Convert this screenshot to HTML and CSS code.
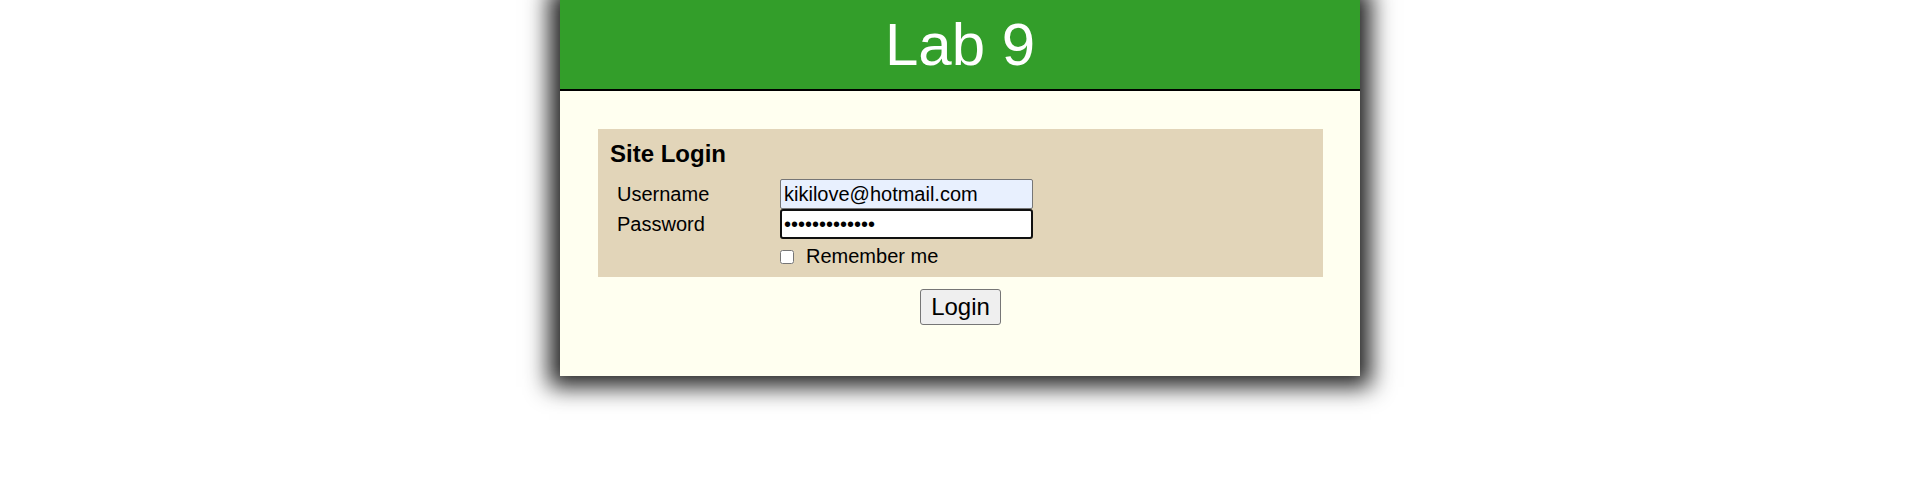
FILE: index.html
```html
<!DOCTYPE html>
<html lang="en">
<head>
<meta charset="utf-8">
<title>Lab 9</title>
<link rel="stylesheet" href="styles.css">
</head>
<body>
<div class="page">
  <header class="banner">
    <h1 class="banner-title">Lab 9</h1>
  </header>
  <main class="content">
    <form class="login-form">
      <div class="panel">
        <h2 class="panel-title">Site Login</h2>
        <div class="fields">
          <label class="field-label" for="user">Username</label>
          <input class="field-input autofilled" id="user" type="text" value="kikilove@hotmail.com">
          <label class="field-label" for="pass">Password</label>
          <input class="field-input focused" id="pass" type="password" value="1234567890123">
          <span class="spacer"></span>
          <label class="remember"><input class="remember-box" type="checkbox">Remember me</label>
        </div>
      </div>
      <div class="actions">
        <button class="login-button" type="button">Login</button>
      </div>
    </form>
  </main>
</div>
</body>
</html>
```

FILE: styles.css
```css
html, body {
  margin: 0;
  padding: 0;
  background: #ffffff;
}

html {
  height: 100%;
}

body {
  min-height: 100%;
  font-family: "Liberation Sans", Arial, sans-serif;
  color: #000;
}

.page {
  width: 800px;
  margin: 0 auto;
  background: #fffff0;
  box-shadow: 0 0 22px 11px #222;
}

.banner {
  background: #339e2a;
  border-bottom: 2px solid #000;
}

.banner-title {
  margin: 0;
  padding: 10px 0;
  font-size: 60px;
  line-height: 69px;
  font-weight: normal;
  color: #fff;
  text-align: center;
}

.content {
  padding: 38px 37px 51px 38px;
}

.login-form {
  margin: 0;
}

.panel {
  background: #e2d5b9;
  padding: 11px 12px 9px 12px;
}

.panel-title {
  margin: 0 0 11px 0;
  font-size: 24px;
  line-height: 28px;
  font-weight: bold;
}

.fields {
  display: grid;
  grid-template-columns: 170px 253px;
  grid-template-rows: 30px 30px auto;
}

.field-label {
  align-self: center;
  padding-left: 7px;
  font-size: 20px;
  line-height: 23px;
}

.field-input {
  box-sizing: border-box;
  width: 253px;
  height: 30px;
  margin: 0;
  padding: 0 3px;
  border: 1px solid #767676;
  border-radius: 2px;
  background: #fff;
  font-family: "Liberation Sans", Arial, sans-serif;
  font-size: 20px;
  color: #000;
  outline: none;
}

.autofilled {
  background: #e8f0fe;
}

.focused {
  border: 2px solid #101010;
  border-radius: 3px;
  padding: 0 2px;
}

.remember {
  display: flex;
  align-items: center;
  gap: 12px;
  margin-top: 6px;
  font-size: 20px;
  line-height: 23px;
}

.remember-box {
  width: 14px;
  height: 14px;
  margin: 0;
}

.actions {
  margin-top: 12px;
  text-align: center;
}

.login-button {
  box-sizing: border-box;
  height: 36px;
  margin: 0;
  padding: 0 10px;
  border: 1px solid #767676;
  border-radius: 3px;
  background: #efefef;
  font-family: "Liberation Sans", Arial, sans-serif;
  font-size: 24px;
  line-height: 28px;
  color: #000;
}
```
